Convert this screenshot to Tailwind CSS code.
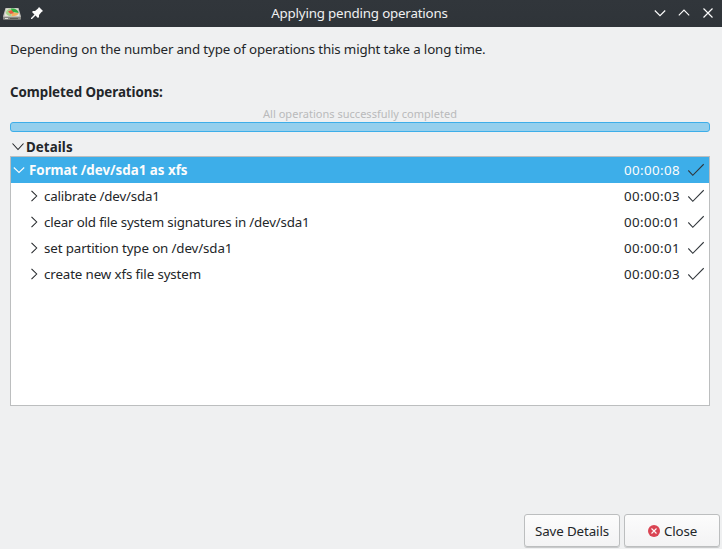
<!DOCTYPE html>
<html lang="en">
<head>
<meta charset="utf-8">
<title>Applying pending operations</title>
<script src="https://cdn.jsdelivr.net/npm/@tailwindcss/browser@4"></script>
</head>
<body class="w-[722px] h-[549px] overflow-hidden bg-[#eff0f1] flex flex-col font-['Noto_Sans',sans-serif] text-[13.33px] leading-[18px] text-[#232629] whitespace-nowrap">
<header class="h-[27px] shrink-0 grid grid-cols-[1fr_auto_1fr] items-center bg-gradient-to-b from-[#31363b] to-[#2f3439] text-[#eff0f1]">
  <div class="flex items-center gap-[10px] pl-[3px]">
    <svg class="w-[18px] h-4" viewBox="0 0 18 16">
      <path d="M2.500 2h13L18 10.500V13H0v-2.500z" fill="#c4c3be"/>
      <path d="M0 10.800h18V13q0 .8-.8.800H.8Q0 13.800 0 13z" fill="#898984"/>
      <path d="M2 12h3v1H2z" fill="#deded9"/>
      <path d="M7 12h8v1H7z" fill="#5e5e59"/>
      <path d="M3.500 2.700h11l2 7.600h-15z" fill="#e9e5da"/>
      <path d="M9 6V2.500C5 2.500 3 4.500 3 6.500 3 9 6 10.300 8.500 10.300z" fill="#a9d48c"/>
      <path d="M8 2.500c4.500-.3 7.500 1.700 7.500 4.500L9 6z" fill="#2fae42"/>
      <path d="M9 6.500l6.500.5c0 2-3 3.300-7 3.300z" fill="#f2b060"/>
      <path d="M5 5.500L8.500 4l2.500 3-3.500 1z" fill="#e85c40"/>
    </svg>
    <svg class="w-3 h-3 -mt-px" viewBox="0 0 12 12" fill="#fcfcfc"><path d="M8 0l4 4-1.500 1L8 8v2L7 11 4.500 8.500 1 12H0v-1l3.500-3.500L1 5l1-1h2l3-2.500z"/></svg>
  </div>
  <h1 class="-mt-px pr-[3px] tracking-[-0.18px]">Applying pending operations</h1>
  <div class="flex items-center justify-end gap-3 pr-2 -mt-px">
    <svg class="w-3 h-3" viewBox="0 0 12 12" fill="none" stroke="#fcfcfc" stroke-width="1.150"><path d="M.8 3.500L6 8.700l5.200-5.200"/></svg>
    <svg class="w-3 h-3" viewBox="0 0 12 12" fill="none" stroke="#fcfcfc" stroke-width="1.150"><path d="M.8 8.300L6 3.100l5.200 5.200"/></svg>
    <svg class="w-3 h-3" viewBox="0 0 12 12" fill="none" stroke="#fcfcfc" stroke-width="1.150"><path d="M1.500 1.500l9 9m0-9l-9 9"/></svg>
  </div>
</header>
<main class="flex-1 flex flex-col pl-[10px] pr-3 pt-[13px]">
  <p class="tracking-[-0.15px]">Depending on the number and type of operations this might take a long time.</p>
  <h2 class="mt-[25px] font-bold tracking-[-0.04px]">Completed Operations:</h2>
  <div class="mt-[5px] h-4 leading-4 text-center text-[11px] tracking-[0.02px] text-[#b9babb]">All operations successfully completed</div>
  <div class="h-[10px] rounded-[3px] border border-[#3daee9] bg-[#94cfed]"></div>
  <div class="mt-[6px] flex items-center pl-[2px] font-bold">
    <svg class="w-[14px] h-3" viewBox="0 0 14 12" fill="none" stroke="#232629" stroke-width="1.100"><path d="M.5 2.500L6 8.500l5.500-6"/></svg>
    <span class="tracking-[0.08px]">Details</span>
  </div>
  <section class="h-[250px] border border-[#bcbebf] bg-white">
    <div class="h-[26px] flex items-center bg-[#3daee9] text-[#fcfcfc] pl-[2px] pr-[5px]">
      <svg class="w-3 h-3 mr-1" viewBox="0 0 12 12" fill="none" stroke="#fcfcfc" stroke-width="1.100"><path d="M.8 3.500L6 8.500l5.200-5"/></svg>
      <span class="flex-1 font-bold">Format /dev/sda1 as xfs</span><span class="tracking-[0.38px]">00:00:08</span>
      <svg class="w-4 h-4 ml-2" viewBox="0 0 16 16" fill="none" stroke="#31363b" stroke-width="1.100"><path d="M.3 8.500l4.500 4.800L15.700 2.200"/></svg>
    </div>
    <div class="h-[26px] flex items-center pl-[17px] pr-[5px]">
      <svg class="w-3 h-3 mr-1" viewBox="0 0 12 12" fill="none" stroke="#232629" stroke-width="1.050"><path d="M3.500.8L8.700 6l-5.200 5.200"/></svg>
      <span class="flex-1 tracking-[-0.19px]">calibrate /dev/sda1</span><span class="tracking-[0.38px]">00:00:03</span>
      <svg class="w-4 h-4 ml-2" viewBox="0 0 16 16" fill="none" stroke="#31363b" stroke-width="1.100"><path d="M.3 8.500l4.500 4.800L15.700 2.200"/></svg>
    </div>
    <div class="h-[26px] flex items-center pl-[17px] pr-[5px]">
      <svg class="w-3 h-3 mr-1" viewBox="0 0 12 12" fill="none" stroke="#232629" stroke-width="1.050"><path d="M3.500.8L8.700 6l-5.200 5.200"/></svg>
      <span class="flex-1 tracking-[-0.18px]">clear old file system signatures in /dev/sda1</span><span class="tracking-[0.38px]">00:00:01</span>
      <svg class="w-4 h-4 ml-2" viewBox="0 0 16 16" fill="none" stroke="#31363b" stroke-width="1.100"><path d="M.3 8.500l4.500 4.800L15.700 2.200"/></svg>
    </div>
    <div class="h-[26px] flex items-center pl-[17px] pr-[5px]">
      <svg class="w-3 h-3 mr-1" viewBox="0 0 12 12" fill="none" stroke="#232629" stroke-width="1.050"><path d="M3.500.8L8.700 6l-5.200 5.200"/></svg>
      <span class="flex-1 tracking-[-0.12px]">set partition type on /dev/sda1</span><span class="tracking-[0.38px]">00:00:01</span>
      <svg class="w-4 h-4 ml-2" viewBox="0 0 16 16" fill="none" stroke="#31363b" stroke-width="1.100"><path d="M.3 8.500l4.500 4.800L15.700 2.200"/></svg>
    </div>
    <div class="h-[26px] flex items-center pl-[17px] pr-[5px]">
      <svg class="w-3 h-3 mr-1" viewBox="0 0 12 12" fill="none" stroke="#232629" stroke-width="1.050"><path d="M3.500.8L8.700 6l-5.200 5.200"/></svg>
      <span class="flex-1 tracking-[-0.12px]">create new xfs file system</span><span class="tracking-[0.38px]">00:00:03</span>
      <svg class="w-4 h-4 ml-2" viewBox="0 0 16 16" fill="none" stroke="#31363b" stroke-width="1.100"><path d="M.3 8.500l4.500 4.800L15.700 2.200"/></svg>
    </div>
  </section>
</main>
<footer class="flex justify-end gap-1 pr-[2px] pb-[2px]">
  <button class="w-24 h-[33px] flex items-center justify-center rounded-[3px] border border-[#bcbebf] bg-gradient-to-b from-[#fcfcfc] to-[#f3f3f4] shadow-[0_1px_0_#c9cacb] tracking-[-0.1px]">Save Details</button>
  <button class="w-24 h-[33px] flex items-center justify-center gap-1 pl-px rounded-[3px] border border-[#bcbebf] bg-gradient-to-b from-[#fcfcfc] to-[#f3f3f4] shadow-[0_1px_0_#c9cacb] tracking-[-0.15px]">
    <svg class="w-3 h-3" viewBox="0 0 12 12"><circle cx="6" cy="6" r="6" fill="#da4453"/><path d="M3.500 3.500l5 5m0-5l-5 5" stroke="#fcfcfc" stroke-width="1.100"/></svg>
    <span>Close</span>
  </button>
</footer>
</body>
</html>
